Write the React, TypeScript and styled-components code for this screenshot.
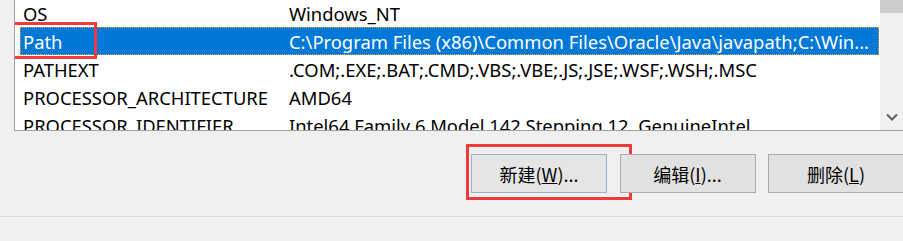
import React from 'react';
import styled, { createGlobalStyle } from 'styled-components';

const GlobalStyle = createGlobalStyle`
  html, body {
    margin: 0;
    padding: 0;
    background: #f0f0f0;
  }
  body {
    font-family: "Noto Sans", "Noto Sans CJK SC", sans-serif;
    color: #000;
  }
`;

const Window = styled.div`
  width: 903px;
  height: 241px;
  overflow: hidden;
  display: flex;
  flex-direction: column;
  background: #f0f0f0;
`;

const ListBox = styled.div`
  margin: -2px 0 0 14px;
  width: 889px;
  height: 131px;
  flex-shrink: 0;
  display: flex;
  background: #fff;
  border: 1px solid #a0a0a0;
  border-right: none;
  overflow: hidden;
`;

const Rows = styled.div`
  flex: 1;
  display: flex;
  flex-direction: column;
  padding-left: 5px;
  padding-right: 1px;
  overflow: hidden;
`;

const Row = styled.div<{ $selected?: boolean }>`
  position: relative;
  flex-shrink: 0;
  height: 28px;
  display: flex;
  align-items: center;
  font-size: 18.4px;
  white-space: nowrap;
  box-sizing: border-box;
  background: ${(p) => (p.$selected ? '#0078d7' : 'transparent')};
  color: ${(p) => (p.$selected ? '#fff' : '#000')};
  border: 1px dotted ${(p) => (p.$selected ? '#e9a34a' : 'transparent')};
`;

const NameCell = styled.span`
  width: 266px;
  padding-left: 2px;
  flex-shrink: 0;
  overflow: hidden;
`;

const ValueCell = styled.span`
  flex: 1;
  overflow: hidden;
`;

const Highlight = styled.div`
  position: absolute;
  border: 3px solid #ef3b3d;
  box-sizing: border-box;
  pointer-events: none;
`;

const PathHighlight = styled(Highlight)`
  left: -10px;
  top: -6px;
  width: 86px;
  height: 37px;
`;

const ScrollBar = styled.div`
  width: 24px;
  flex-shrink: 0;
  background: #f0f0f0;
  display: flex;
  flex-direction: column;
  justify-content: space-between;
`;

const Thumb = styled.div`
  height: 14px;
  background: #cdcdcd;
`;

const ArrowButton = styled.div`
  height: 26px;
  display: flex;
  align-items: center;
  justify-content: center;
`;

const ButtonRow = styled.div`
  margin: 23px -1px 0 0;
  display: flex;
  justify-content: flex-end;
  gap: 12.5px;
`;

const Button = styled.div<{ $default?: boolean }>`
  position: relative;
  width: 136px;
  height: 39px;
  box-sizing: border-box;
  display: flex;
  align-items: center;
  justify-content: center;
  font-size: 18px;
  background: ${(p) => (p.$default ? '#e5e5e5' : '#e1e1e1')};
  border: 1px solid ${(p) => (p.$default ? '#9fb0c2' : '#adadad')};
  font-family: "Noto Sans CJK SC", "Noto Sans", sans-serif;
`;

const ButtonHighlight = styled(Highlight)`
  left: -6px;
  top: -11px;
  width: 166px;
  height: 56px;
`;

const Divider = styled.div`
  margin-top: 23px;
  height: 1px;
  background: #dcdcdc;
`;

const rows = [
  { name: 'OS', value: 'Windows_NT' },
  {
    name: 'Path',
    value: 'C:\\Program Files (x86)\\Common Files\\Oracle\\Java\\javapath;C:\\Win...',
    selected: true,
  },
  { name: 'PATHEXT', value: '.COM;.EXE;.BAT;.CMD;.VBS;.VBE;.JS;.JSE;.WSF;.WSH;.MSC' },
  { name: 'PROCESSOR_ARCHITECTURE', value: 'AMD64' },
  { name: 'PROCESSOR_IDENTIFIER', value: 'Intel64 Family 6 Model 142 Stepping 12, GenuineIntel' },
];

const App = () => (
  <Window>
    <GlobalStyle />
    <ListBox>
      <Rows>
        {rows.map((r) => (
          <Row key={r.name} $selected={r.selected}>
            <NameCell>{r.name}</NameCell>
            <ValueCell>{r.value}</ValueCell>
            {r.selected && <PathHighlight />}
          </Row>
        ))}
      </Rows>
      <ScrollBar>
        <Thumb />
        <ArrowButton>
          <svg width="12" height="8" viewBox="0 0 12 8">
            <path d="M1 1.5 L6 6.5 L11 1.5" fill="none" stroke="#606060" strokeWidth="2" />
          </svg>
        </ArrowButton>
      </ScrollBar>
    </ListBox>
    <ButtonRow>
      <Button $default>
        <span>新建(<u>W</u>)...</span>
        <ButtonHighlight />
      </Button>
      <Button>
        <span>编辑(<u>I</u>)...</span>
      </Button>
      <Button>
        <span>删除(<u>L</u>)</span>
      </Button>
    </ButtonRow>
    <Divider />
  </Window>
);

export default App;
